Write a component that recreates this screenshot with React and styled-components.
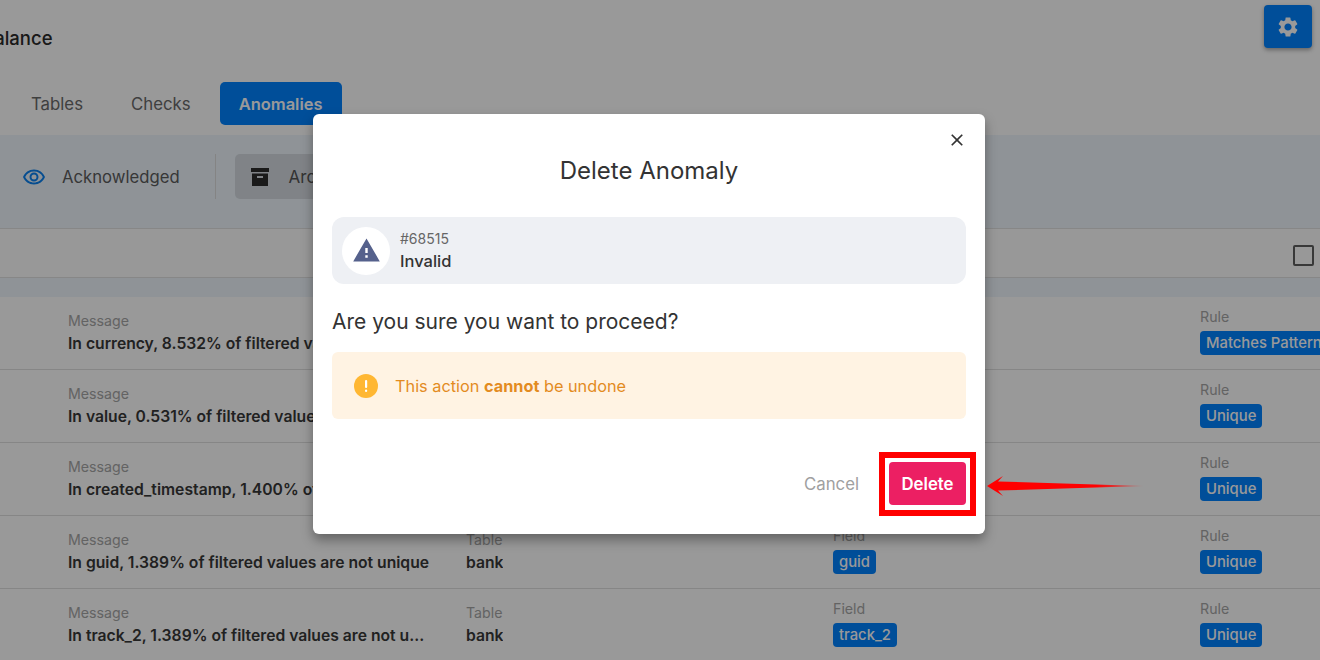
import React from 'react';
import styled, { createGlobalStyle } from 'styled-components';
import { MdSettings, MdOutlineRemoveRedEye, MdWarning, MdClose } from 'react-icons/md';

const GlobalStyle = createGlobalStyle`
  html, body {
    margin: 0;
    padding: 0;
    background: #fff;
  }
  body {
    font-family: Inter, "Liberation Sans", sans-serif;
    overflow: hidden;
  }
`;

const Page = styled.div`
  position: relative;
  width: 1320px;
  height: 660px;
  overflow: hidden;
`;

const Header = styled.header`
  display: flex;
  align-items: flex-start;
  justify-content: space-between;
  height: 82px;
  padding: 5px 8px 0 0;
  box-sizing: border-box;
`;

const Title = styled.h1`
  margin: 22px 0 0 -18px;
  font-size: 18.5px;
  line-height: 22px;
  font-weight: 500;
  color: #2a2a2a;
`;

const GearButton = styled.button`
  display: flex;
  align-items: center;
  justify-content: center;
  width: 48px;
  height: 43px;
  border: none;
  border-radius: 4px;
  background: #0082ff;
  color: #fff;
  font-size: 24px;
  padding: 0;
  box-shadow: 0 2px 4px rgba(0, 0, 0, 0.35);
`;

const Tabs = styled.nav`
  display: flex;
  align-items: center;
  gap: 10px;
  height: 43px;
  padding-left: 12px;
  margin-bottom: 10px;
`;

const Tab = styled.div`
  display: flex;
  align-items: center;
  height: 43px;
  padding: 0 19px;
  border-radius: 5px;
  font-size: ${(p) => (p.$active ? 16.5 : 16.8)}px;
  font-weight: ${(p) => (p.$active ? 600 : 400)};
  color: ${(p) => (p.$active ? '#fff' : '#6a6a6a')};
  background: ${(p) => (p.$active ? '#0082ff' : 'transparent')};
`;

const Toolbar = styled.div`
  display: flex;
  align-items: center;
  height: 94px;
  padding: 0 0 10px 22px;
  box-sizing: border-box;
  background: #eef6fc;
  border-bottom: 1px solid #e2e2e2;
`;

const EyeIcon = styled(MdOutlineRemoveRedEye)`
  font-size: 24px;
  color: #0a80f0;
  margin-right: 16px;
`;

const ToolLabel = styled.span`
  font-size: 16.7px;
  color: #5c5c5c;
`;

const Divider = styled.div`
  width: 1px;
  height: 45px;
  margin: 0 19px 0 35px;
  background: #dcdcdc;
`;

const ArchiveTab = styled.div`
  display: flex;
  align-items: center;
  gap: 20px;
  height: 45px;
  width: 200px;
  padding-left: 16px;
  box-sizing: border-box;
  border-radius: 5px;
  background: #d5dbe2;
  font-size: 17px;
  color: #555;
`;

const SelectBar = styled.div`
  display: flex;
  align-items: center;
  justify-content: flex-end;
  height: 49px;
  padding: 4px 6px 0 0;
  box-sizing: border-box;
  background: #fdfdfd;
  border-bottom: 1px solid #e2e2e2;
`;

const Checkbox = styled.div`
  width: 17px;
  height: 17px;
  border: 2px solid #5e5e5e;
  border-radius: 2px;
`;

const Spacer = styled.div`
  height: 19px;
  background: #eef6fc;
`;

const Row = styled.div`
  display: grid;
  grid-template-columns: 398px 367px 367px 1fr;
  height: 73px;
  padding: 16px 0 0 68px;
  box-sizing: border-box;
  border-bottom: 1px solid #e0e0e0;
`;

const Cell = styled.div`
  display: flex;
  flex-direction: column;
  align-items: flex-start;
  min-width: 0;
  white-space: nowrap;
  margin-top: ${(p) => (p.$raised ? -4 : 0)}px;
`;

const Label = styled.span`
  font-size: 14.2px;
  line-height: 16px;
  color: #a6a6a6;
`;

const Value = styled.span`
  font-size: 15.7px;
  line-height: 20px;
  margin-top: 5px;
  font-weight: 560;
  color: #383838;
  max-width: 365px;
  overflow: hidden;
  text-overflow: ellipsis;
`;

const Badge = styled.span`
  display: inline-block;
  margin-top: 6px;
  padding: 0 6px;
  height: 24px;
  line-height: 24px;
  border-radius: 4px;
  background: #0082ff;
  color: #fff;
  font-size: 14.8px;
  font-weight: 500;
`;

const Overlay = styled.div`
  position: absolute;
  inset: 0;
  display: flex;
  align-items: flex-start;
  padding: 114px 0 0 313px;
  background: rgba(0, 0, 0, 0.4);
`;

const Modal = styled.div`
  position: relative;
  display: flex;
  flex-direction: column;
  width: 672px;
  height: 420px;
  padding: 0 19px;
  box-sizing: border-box;
  border-radius: 6px;
  background: #fff;
  box-shadow: 0 6px 12px rgba(0, 0, 0, 0.35);
`;

const CloseButton = styled(MdClose)`
  position: absolute;
  top: 16px;
  right: 18px;
  font-size: 20px;
  color: #333;
`;

const ModalTitle = styled.h2`
  margin: 41px 0 31px;
  height: 31px;
  font-size: 24px;
  line-height: 31px;
  font-weight: 400;
  text-align: center;
  color: #333;
`;

const InfoCard = styled.div`
  display: flex;
  align-items: center;
  gap: 10px;
  height: 67px;
  padding: 0 10px;
  border-radius: 12px;
  background: #eef0f4;
`;

const IconCircle = styled.div`
  display: flex;
  align-items: center;
  justify-content: center;
  width: 48px;
  height: 48px;
  border-radius: 50%;
  background: #fff;
  color: #55618c;
  font-size: 29px;
`;

const InfoText = styled.div`
  display: flex;
  flex-direction: column;
`;

const InfoId = styled.span`
  font-size: 14px;
  line-height: 20px;
  color: #666;
`;

const InfoName = styled.span`
  margin-top: 1px;
  font-size: 16.5px;
  line-height: 23px;
  font-weight: 500;
  color: #333;
`;

const Question = styled.p`
  margin: 24px 0 16px;
  font-size: 21px;
  line-height: 28px;
  color: #333;
`;

const Alert = styled.div`
  display: flex;
  align-items: center;
  gap: 17px;
  height: 67px;
  padding-left: 22px;
  border-radius: 6px;
  background: #fff3e3;
  font-size: 16.3px;
  color: #e38b1f;
`;

const Footer = styled.div`
  display: flex;
  align-items: center;
  justify-content: flex-end;
  gap: 30px;
  margin-top: 43px;
`;

const CancelButton = styled.span`
  font-size: 16.8px;
  color: #a0a0a0;
`;

const DeleteButton = styled.button`
  width: 77px;
  height: 43px;
  padding: 0;
  border: none;
  border-radius: 4px;
  background: #ec1f63;
  color: #fff;
  font-family: inherit;
  font-size: 16.8px;
  font-weight: 600;
`;

const Highlight = styled.div`
  position: absolute;
  left: 879px;
  top: 452px;
  width: 97px;
  height: 64px;
  box-sizing: border-box;
  border: 6px solid #ff0000;
`;

const Arrow = styled.svg`
  position: absolute;
  left: 985px;
  top: 472px;
`;

const rows = [
  { message: 'In currency, 8.532% of filtered values are not unique', field: 'currency', rule: 'Matches Pattern' },
  { message: 'In value, 0.531% of filtered values are not unique', field: 'value', rule: 'Unique' },
  { message: 'In created_timestamp, 1.400% of filtered values are not unique', field: 'created_timestamp', rule: 'Unique' },
  { message: 'In guid, 1.389% of filtered values are not unique', field: 'guid', rule: 'Unique' },
  { message: 'In track_2, 1.389% of filtered values are not unique', field: 'track_2', rule: 'Unique' },
];

const App = () => (
  <Page>
    <GlobalStyle />
    <Header>
      <Title>Balance</Title>
      <GearButton><MdSettings /></GearButton>
    </Header>
    <Tabs>
      <Tab>Tables</Tab>
      <Tab>Checks</Tab>
      <Tab $active>Anomalies</Tab>
    </Tabs>
    <Toolbar>
      <EyeIcon />
      <ToolLabel>Acknowledged</ToolLabel>
      <Divider />
      <ArchiveTab>
        <svg width="18" height="18" viewBox="0 0 18 18">
          <rect x="0" y="0" width="18" height="4" fill="#2c2c2c" />
          <path d="M1 5.5h16V18H1z M6 8v2h6V8z" fill="#2c2c2c" fillRule="evenodd" />
        </svg>
        Archived
      </ArchiveTab>
    </Toolbar>
    <SelectBar><Checkbox /></SelectBar>
    <Spacer />
    {rows.map((row) => (
      <Row key={row.field}>
        <Cell><Label>Message</Label><Value>{row.message}</Value></Cell>
        <Cell><Label>Table</Label><Value>bank</Value></Cell>
        <Cell $raised><Label>Field</Label><Badge>{row.field}</Badge></Cell>
        <Cell $raised><Label>Rule</Label><Badge>{row.rule}</Badge></Cell>
      </Row>
    ))}
    <Overlay>
      <Modal>
        <CloseButton />
        <ModalTitle>Delete Anomaly</ModalTitle>
        <InfoCard>
          <IconCircle><MdWarning /></IconCircle>
          <InfoText>
            <InfoId>#68515</InfoId>
            <InfoName>Invalid</InfoName>
          </InfoText>
        </InfoCard>
        <Question>Are you sure you want to proceed?</Question>
        <Alert>
          <svg width="24" height="24" viewBox="0 0 24 24">
            <circle cx="12" cy="12" r="12" fill="#ffb733" />
            <rect x="11" y="6" width="2.2" height="8" rx="1" fill="#fff" />
            <rect x="11" y="15.6" width="2.2" height="2.4" rx="1" fill="#fff" />
          </svg>
          <span>This action <b>cannot</b> be undone</span>
        </Alert>
        <Footer>
          <CancelButton>Cancel</CancelButton>
          <DeleteButton>Delete</DeleteButton>
        </Footer>
      </Modal>
    </Overlay>
    <Highlight />
    <Arrow width="160" height="28" viewBox="0 0 160 28">
      <defs>
        <linearGradient id="tail" x1="0" x2="1" y1="0" y2="0">
          <stop offset="0.7" stopColor="#ff0000" />
          <stop offset="1" stopColor="#ff0000" stopOpacity="0.25" />
        </linearGradient>
      </defs>
      <polygon points="2,14 18,4 13,9.5 158,14 13,18.5 18,24" fill="url(#tail)" />
    </Arrow>
  </Page>
);

export default App;
